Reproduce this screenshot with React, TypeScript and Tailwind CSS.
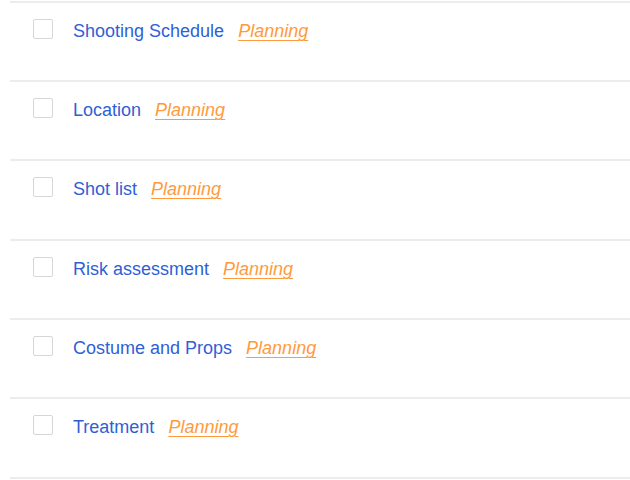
import React from "react";

const rows: { title: string; h: string }[] = [
  { title: "Shooting Schedule", h: "h-[79px]" },
  { title: "Location", h: "h-[79px]" },
  { title: "Shot list", h: "h-[80px]" },
  { title: "Risk assessment", h: "h-[79px]" },
  { title: "Costume and Props", h: "h-[79px]" },
  { title: "Treatment", h: "h-[80px]" },
];

export default function App() {
  return (
    <div
      className="w-[630px] h-[480px] bg-white overflow-hidden pt-[1px] pl-[10px]"
      style={{ fontFamily: '"Liberation Sans", Arial, sans-serif' }}
    >
      {rows.map((r) => (
        <div
          key={r.title}
          className={`${r.h} border-t-2 border-[#ececec] flex items-start pl-[23px] pt-[16px]`}
        >
          <div className="w-[20px] h-[20px] border border-[#d6d6d6] rounded-[2px] bg-white shrink-0" />
          <div className="ml-[20px] mt-[2px] flex items-baseline text-[18px] leading-[20px]">
            <span className="text-[#2f5fd6]">{r.title}</span>
            <span className="ml-[14px] italic text-[#ff9a3c] underline underline-offset-[3px] decoration-1">
              Planning
            </span>
          </div>
        </div>
      ))}
      <div className="border-t-2 border-[#ececec]" />
    </div>
  );
}
